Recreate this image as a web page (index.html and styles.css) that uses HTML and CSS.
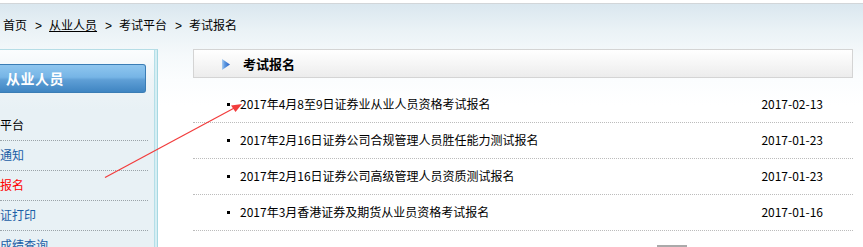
FILE: index.html
```html
<!DOCTYPE html>
<html lang="zh-CN">
<head>
<meta charset="utf-8">
<title>考试报名</title>
<link rel="stylesheet" href="styles.css">
</head>
<body>
<div class="page">
  <div class="topline"></div>
  <div class="crumb">
    <span>首页</span><span class="sep">&gt;</span><a class="crumb-link" href="#">从业人员</a><span class="sep">&gt;</span><span>考试平台</span><span class="sep">&gt;</span><span>考试报名</span>
  </div>
  <div class="content">
    <aside class="sidebar">
      <div class="side-btn">从业人员</div>
      <ul class="side-menu">
        <li class="item">平台</li>
        <li class="item link">通知</li>
        <li class="item active">报名</li>
        <li class="item link">证打印</li>
        <li class="item link">成绩查询</li>
      </ul>
    </aside>
    <main class="main">
      <div class="panel-head">
        <svg class="tri" width="8" height="11" viewBox="0 0 8 11">
          <defs>
            <linearGradient id="tg" x1="0" y1="0" x2="1" y2="0">
              <stop offset="0" stop-color="#a9cdf2"/>
              <stop offset="0.35" stop-color="#5b97e0"/>
              <stop offset="1" stop-color="#2a62c4"/>
            </linearGradient>
          </defs>
          <polygon points="0,0 8,5.5 0,11" fill="url(#tg)"/>
        </svg>
        <span class="panel-title">考试报名</span>
      </div>
      <ul class="news">
        <li class="row"><span class="dot"></span><span class="title">2017年4月8至9日证券业从业人员资格考试报名</span><span class="date">2017-02-13</span></li>
        <li class="row"><span class="dot"></span><span class="title">2017年2月16日证券公司合规管理人员胜任能力测试报名</span><span class="date">2017-01-23</span></li>
        <li class="row"><span class="dot"></span><span class="title">2017年2月16日证券公司高级管理人员资质测试报名</span><span class="date">2017-01-23</span></li>
        <li class="row"><span class="dot"></span><span class="title">2017年3月香港证券及期货从业员资格考试报名</span><span class="date">2017-01-16</span></li>
      </ul>
      <div class="pager"><span class="pager-btn"></span></div>
    </main>
  </div>
  <svg class="annot" width="863" height="247" viewBox="0 0 863 247">
    <line x1="105" y1="177.5" x2="238" y2="106" stroke="#f23c3c" stroke-width="1.2"/>
    <polygon points="242,104 231,105.5 235.5,112" fill="#f23c3c"/>
  </svg>
</div>
</body>
</html>
```

FILE: styles.css
```css
* { box-sizing: border-box; }
html, body {
  margin: 0;
  padding: 0;
}
body {
  width: 863px;
  height: 247px;
  overflow: hidden;
  font-family: "Noto Sans CJK SC", "Noto Sans", sans-serif;
  font-size: 12px;
  color: #000;
  background: #fff;
}
.page {
  position: relative;
  width: 863px;
  height: 247px;
  overflow: hidden;
  background: linear-gradient(to bottom, #fff 0, #fff 3px, #dae7ef 4px, #eaf2f6 30px, #f5f9fb 55px, #fbfdfe 80px, #fff 105px);
}
.topline {
  height: 4px;
  border-bottom: 1px solid #d2d6d9;
  background: #fff;
}
.crumb {
  height: 45px;
  padding-left: 3px;
  padding-top: 13px;
  line-height: 16px;
  white-space: nowrap;
}
.crumb .sep {
  display: inline-block;
  margin: 0 7px 0 8px;
  font-family: "Liberation Sans", sans-serif;
}
.crumb-link {
  color: #000;
  text-decoration: underline;
}
.content {
  display: flex;
  align-items: flex-start;
}
.sidebar {
  width: 158px;
  height: 200px;
  flex: none;
  border-top: 1px solid #b6dde6;
  border-right: 1px solid #a7d8e2;
  box-shadow: inset -2px 0 0 #d6eef3, inset -3px 0 0 #b4dfe8;
  background: linear-gradient(to bottom, #fbfdfe 0, #eef4f7 30px, #e8f1f5 60px);
  padding-top: 14px;
}
.side-btn {
  width: 146px;
  height: 29px;
  border: 1px solid #3a7db5;
  border-left: none;
  border-radius: 0 3px 3px 0;
  background: linear-gradient(to bottom, #8fc6ef 0, #76b5e6 45%, #5f9fd6 55%, #3f85c2 100%);
  color: #fff;
  font-weight: bold;
  font-size: 14px;
  line-height: 27px;
  padding-left: 6px;
  letter-spacing: 0.5px;
}
.side-menu {
  list-style: none;
  margin: 18px 0 0 0;
  padding: 0;
  width: 148px;
}
.item {
  height: 30px;
  line-height: 27px;
  border-bottom: 1px dotted #9aa3a8;
  white-space: nowrap;
  color: #000;
}
.item.link { color: #1b5ea6; }
.item.active { color: #f00; }
.main {
  width: 660px;
  margin-left: 35px;
  flex: none;
}
.panel-head {
  height: 29px;
  border: 1px solid #d4d4d4;
  background: linear-gradient(to bottom, #ffffff 0, #f6f6f6 50%, #ececec 100%);
  display: flex;
  align-items: center;
  padding-left: 28px;
}
.tri {
  display: block;
  margin-top: 1px;
}
.panel-title {
  margin-left: 13px;
  font-weight: bold;
  font-size: 13px;
  line-height: 16px;
}
.news {
  list-style: none;
  margin: 0;
  padding: 9px 0 0 0;
}
.row {
  height: 36px;
  border-bottom: 1px dotted #bcbcbc;
  display: flex;
  align-items: center;
  padding-left: 34px;
  padding-right: 30px;
  padding-bottom: 1px;
  white-space: nowrap;
}
.dot {
  width: 3px;
  height: 3px;
  background: #000;
  flex: none;
}
.title {
  margin-left: 10px;
  flex: 1;
  line-height: 16px;
}
.date {
  flex: none;
  line-height: 16px;
  font-size: 12px;
}
.pager {
  padding-top: 14px;
  padding-left: 464px;
}
.pager-btn {
  display: block;
  width: 30px;
  height: 2px;
  background: #aaa;
}
.annot {
  position: absolute;
  left: 0;
  top: 0;
  pointer-events: none;
}
```
